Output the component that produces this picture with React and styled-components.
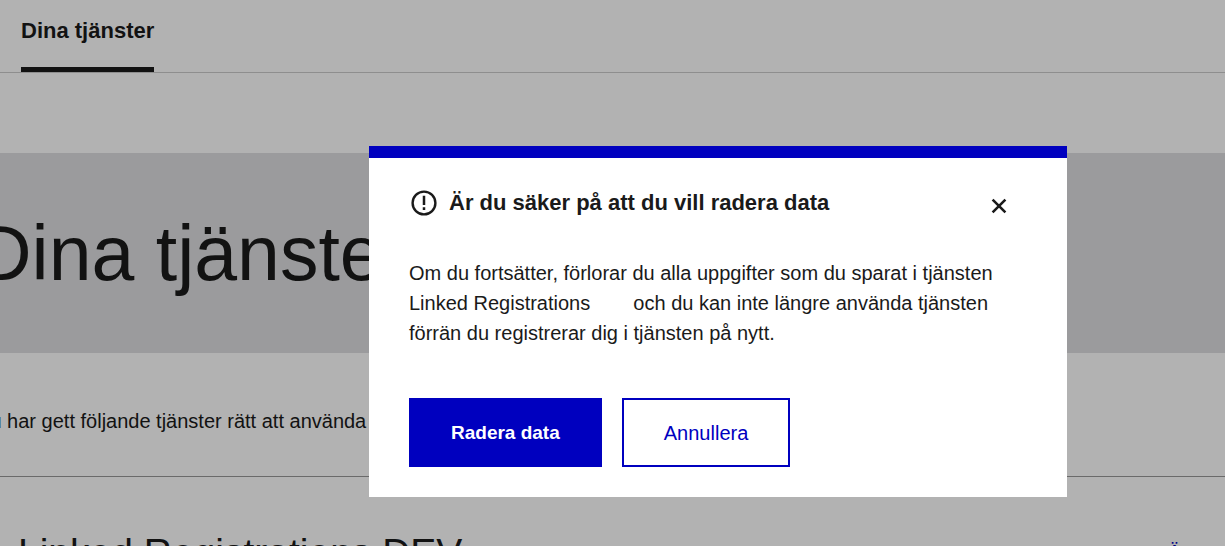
import React from "react";
import styled, { createGlobalStyle, css } from "styled-components";

const GlobalStyle = createGlobalStyle`
  * { box-sizing: border-box; }
  body {
    margin: 0;
    background: #ffffff;
    color: #1a1a1a;
    font-family: "Liberation Sans", Arial, sans-serif;
    font-size: 20px;
    line-height: 30px;
  }
`;

const Page = styled.div`
  height: 100vh;
  overflow: hidden;
`;

const Header = styled.header`
  display: flex;
  height: 73px;
  padding-left: 21px;
  border-bottom: 1px solid #cccccc;
`;

const NavLink = styled.a`
  display: flex;
  padding-top: 16px;
  border-bottom: 5px solid #1a1a1a;
  color: inherit;
  font-size: 22px;
  font-weight: 700;
  text-decoration: none;
`;

const Hero = styled.section`
  display: flex;
  align-items: center;
  height: 200px;
  margin-top: 80px;
  background: #dedfe1;
`;

const HeroTitle = styled.h1`
  margin: 0 0 0 -24px;
  font-size: 77px;
  line-height: 96px;
  font-weight: 400;
  white-space: nowrap;
`;

const Intro = styled.p`
  margin: 0 0 0 -24px;
  padding: 53px 0 40px;
  white-space: nowrap;
`;

const Service = styled.section`
  display: flex;
  justify-content: space-between;
  padding: 46px 44px 40px 18px;
  border-top: 1px solid #999999;
`;

const ServiceTitle = styled.h2`
  margin: 0;
  font-size: 39px;
  line-height: 60px;
  font-weight: 400;
  white-space: nowrap;
`;

const ServiceLink = styled.a`
  padding-top: 14px;
  color: #0000bf;
  text-decoration: none;
`;

const Overlay = styled.div`
  position: fixed;
  inset: 0;
  display: flex;
  justify-content: center;
  align-items: flex-start;
  padding: 146px 0 0 211px;
  background: rgba(0, 0, 0, 0.3);
`;

const Dialog = styled.section`
  width: 100%;
  max-width: 698px;
  padding: 24px 40px 30px;
  border-top: 12px solid #0000bf;
  background: #ffffff;
`;

const DialogHeader = styled.header`
  display: flex;
  align-items: center;
  gap: 10px;
  height: 42px;
`;

const DialogTitle = styled.h2`
  flex: 1;
  margin: 0;
  font-size: 22px;
  line-height: 30px;
  font-weight: 700;
`;

const CloseButton = styled.button`
  display: flex;
  margin: 6px 13px 0 0;
  padding: 0;
  border: 0;
  background: none;
  color: inherit;
`;

const DialogText = styled.p`
  margin: 34px 0 50px;
`;

const ServiceSuffix = styled.span`
  display: inline-block;
  width: 32px;
`;

const Actions = styled.div`
  display: flex;
  gap: 20px;
`;

const Button = styled.button`
  height: 69px;
  padding: 0 40px;
  border: 2px solid #0000bf;
  background: #ffffff;
  color: #0000bf;
  font: inherit;
  ${({ $primary }) =>
    $primary &&
    css`
      background: #0000bf;
      color: #ffffff;
      font-size: 19px;
      font-weight: 700;
    `}
`;

function AlertIcon() {
  return (
    <svg width="30" height="30" viewBox="0 0 30 30" fill="none" aria-hidden="true">
      <circle cx="15" cy="15" r="11.4" stroke="currentColor" strokeWidth="2.4" />
      <path d="M15 7.8v9.2M15 19.3v2.6" stroke="currentColor" strokeWidth="2.5" />
    </svg>
  );
}

function CloseIcon() {
  return (
    <svg width="30" height="30" viewBox="0 0 30 30" fill="none" aria-hidden="true">
      <path d="M8.6 8.6l12.8 12.8M21.4 8.6l-12.8 12.8" stroke="currentColor" strokeWidth="2.6" />
    </svg>
  );
}

export default function App() {
  return (
    <>
      <GlobalStyle />
      <Page>
        <Header>
          <NavLink href="#tjanster">Dina tjänster</NavLink>
        </Header>
        <main>
          <Hero>
            <HeroTitle>Dina tjänster</HeroTitle>
          </Hero>
          <Intro>Du har gett följande tjänster rätt att använda</Intro>
          <Service>
            <ServiceTitle>Linked Registrations DEV</ServiceTitle>
            <ServiceLink href="#oppna">Ä</ServiceLink>
          </Service>
        </main>
      </Page>
      <Overlay>
        <Dialog role="dialog" aria-modal="true" aria-labelledby="dialog-title">
          <DialogHeader>
            <AlertIcon />
            <DialogTitle id="dialog-title">Är du säker på att du vill radera data</DialogTitle>
            <CloseButton type="button" aria-label="Stäng">
              <CloseIcon />
            </CloseButton>
          </DialogHeader>
          <DialogText>
            Om du fortsätter, förlorar du alla uppgifter som du sparat i tjänsten
            <br />
            Linked Registrations <ServiceSuffix /> och du kan inte längre använda tjänsten
            <br />
            förrän du registrerar dig i tjänsten på nytt.
          </DialogText>
          <Actions>
            <Button type="button" $primary>Radera data</Button>
            <Button type="button">Annullera</Button>
          </Actions>
        </Dialog>
      </Overlay>
    </>
  );
}
